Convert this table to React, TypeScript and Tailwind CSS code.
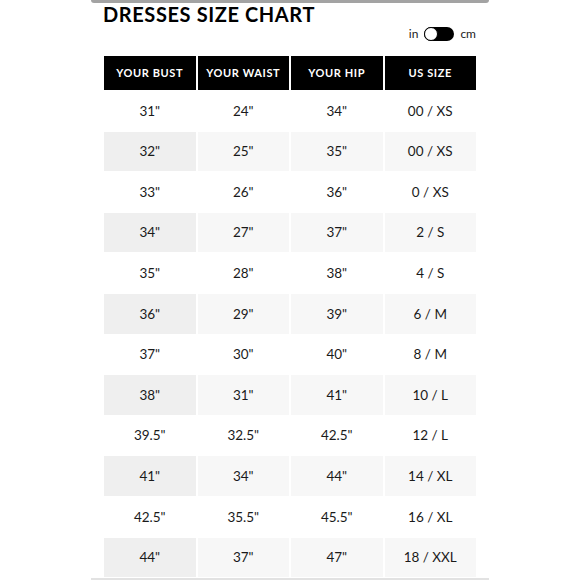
const rows: [string, string, string, string][] = [
  ['31"', '24"', '34"', '00 / XS'],
  ['32"', '25"', '35"', '00 / XS'],
  ['33"', '26"', '36"', '0 / XS'],
  ['34"', '27"', '37"', '2 / S'],
  ['35"', '28"', '38"', '4 / S'],
  ['36"', '29"', '39"', '6 / M'],
  ['37"', '30"', '40"', '8 / M'],
  ['38"', '31"', '41"', '10 / L'],
  ['39.5"', '32.5"', '42.5"', '12 / L'],
  ['41"', '34"', '44"', '14 / XL'],
  ['42.5"', '35.5"', '45.5"', '16 / XL'],
  ['44"', '37"', '47"', '18 / XXL'],
];

const headers = ['YOUR BUST', 'YOUR WAIST', 'YOUR HIP', 'US SIZE'];

export default function App() {
  return (
    <div className="w-[580px] h-[580px] bg-white overflow-hidden font-['Lato',sans-serif] text-[#1a1a1a]">
      <div className="w-[398px] mx-auto">
        <div className="h-[3px] bg-[#a3a3a3] rounded-b-[3px]" />
        <div className="px-[13px]">
          <h1 className="text-[20px] leading-[22px] font-bold tracking-[0.6px] text-black -ml-[1px]">
            DRESSES SIZE CHART
          </h1>
          <div className="flex items-center justify-end gap-[6px] mt-[1px] h-[16px] text-[12px] text-[#222]">
            <span>in</span>
            <div className="relative w-[30px] h-[14px] rounded-full bg-black">
              <div className="absolute left-0 top-0 w-[14px] h-[14px] rounded-full bg-white border-[1.5px] border-black" />
            </div>
            <span>cm</span>
          </div>
          <div className="grid grid-cols-4 gap-x-[2px] gap-y-[1px] mt-[14px]">
            {headers.map((h) => (
              <div
                key={h}
                className="h-[34px] bg-black text-white flex items-center justify-center text-[11px] font-bold tracking-[0.6px]"
              >
                {h}
              </div>
            ))}
            {rows.map((r, i) =>
              r.map((c, j) => (
                <div
                  key={`${i}-${j}`}
                  className={`h-[39.6px] flex items-center justify-center text-[13.5px] ${
                    i % 2 === 1 ? (j === 0 ? 'bg-[#efefef]' : 'bg-[#f7f7f7]') : 'bg-white'
                  }`}
                >
                  {c}
                </div>
              ))
            )}
          </div>
        </div>
        <div className="h-[3px] bg-[#e2e2e2] mt-[1px]" />
      </div>
    </div>
  );
}
